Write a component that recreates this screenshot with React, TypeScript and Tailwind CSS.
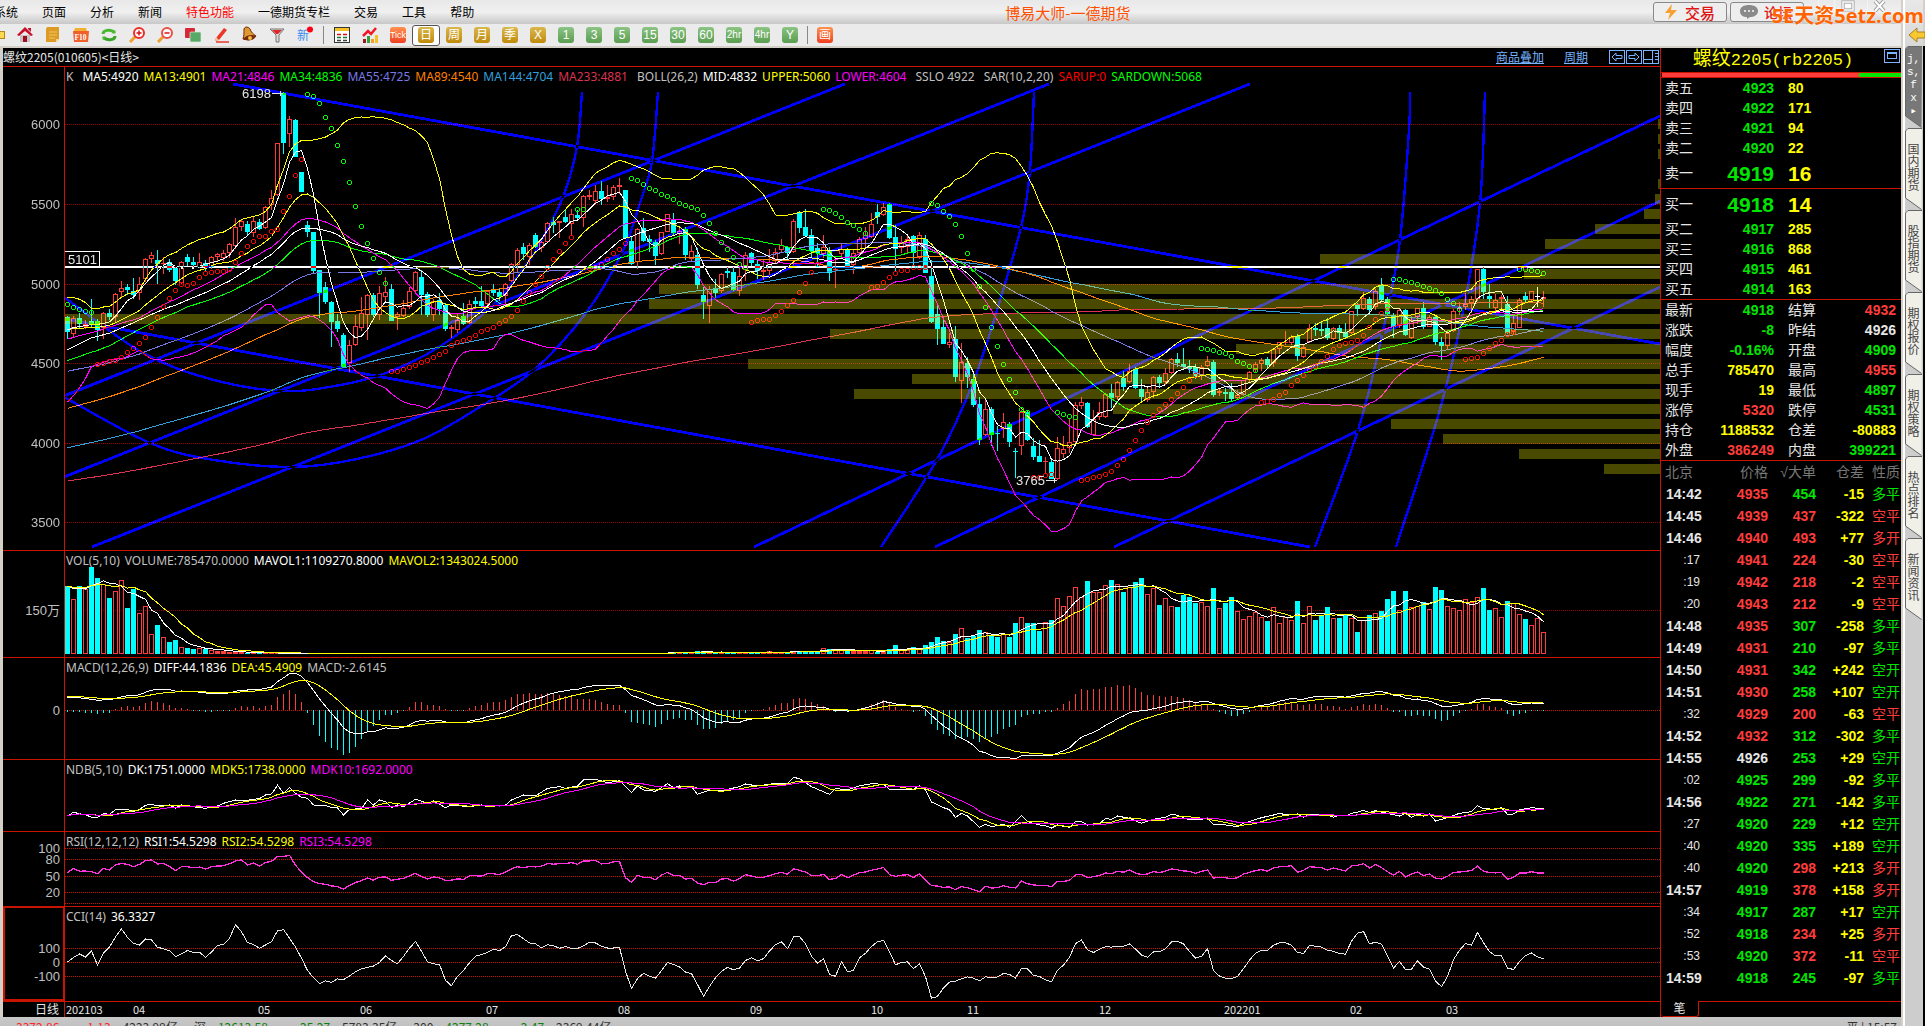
import type { ReactNode } from 'react';

/**
 * Daily bars: direction (u / d / n), high, body top, body bottom, low.
 * Everything in the charts is measured in chart units, three units per pixel.
 */
const BARS = `
d707,710,756,778 u707,714,762,770 d700,713,733,748 u720,732,740,748 d657,724,736,740 d718,722,750,783
u697,700,745,777 d686,699,711,720 u640,643,710,727 u603,625,636,652 d612,620,630,646 d595,633,646,657
u591,612,640,660 u535,538,598,607 u516,526,537,548 d510,540,553,612 u532,550,553,582 d537,546,570,577
d560,563,602,615 u543,547,608,611 d522,531,547,557 d530,546,555,560 u519,547,560,563 d540,550,560,573
u527,532,560,566 u519,523,532,543 u511,520,535,543 u490,493,520,535 u413,442,499,508 u420,424,440,453
d422,432,456,464 u411,424,460,470 d418,426,446,450 u378,382,445,446 u329,355,374,391 u188,190,346,348
d35,40,188,222 u108,118,163,200 d117,121,230,231 d276,277,335,336 d423,435,455,470 d455,457,572,579
d570,571,638,714 d606,622,665,672 d663,667,725,800 d701,724,746,755 d760,766,862,864 u780,794,850,876
u705,739,796,798 u650,700,743,754 u643,646,706,780 d640,645,705,712 u618,640,704,720 u590,637,652,663
d612,628,722,724 u697,703,711,749 u661,683,708,712 u620,634,682,686 u574,577,634,637 d570,592,645,705
d636,643,704,711 u658,662,704,722 d640,661,686,704 d670,675,748,752 u735,742,746,775 u702,721,750,760
d668,707,732,735 u661,673,729,732 d650,663,671,680 d618,664,678,680 u630,634,672,675 d612,629,639,648
d628,637,650,663 u609,613,648,676 u550,553,602,607 u505,509,554,575 d488,502,522,540 u490,496,532,555
d459,465,500,503 u482,487,505,516 u425,430,487,489 d410,427,436,458 u422,424,428,473 d391,411,425,430
u387,403,433,466 d390,405,415,420 u344,349,415,440 u330,346,350,361 u314,334,364,373 d303,334,358,374
u316,352,358,366 u314,322,350,360 u294,316,322,341 d330,331,473,478 d470,484,553,555 u443,448,546,567
d413,444,482,485 d465,478,487,517 d480,486,528,554 u455,457,523,525 u401,403,455,457 d399,420,458,465
u444,452,462,492 d440,447,524,540 u495,514,537,542 d504,526,614,627 d620,645,665,717 u617,628,678,728
d596,625,638,655 u580,583,634,640 d561,573,578,595 d560,577,629,632 u560,589,634,648 u515,525,570,602
d517,519,549,558 d540,552,573,598 u540,570,577,600 u507,546,573,585 u504,517,540,550 u476,495,510,516
d499,501,520,540 u417,424,516,520 d393,395,443,458 d388,441,467,471 d448,465,514,530 d490,505,520,558
u464,500,522,535 d500,512,580,602 u530,566,570,625 u490,507,522,530 d505,510,560,565 u508,520,556,582
u470,476,520,525 u441,466,476,508 u400,433,470,474 d372,395,410,432 u370,380,405,408 d370,372,475,477
d436,472,506,573 u468,487,503,518 u465,478,500,520 d465,468,520,557 u457,464,535,537 d465,477,578,580
d540,588,725,730 d668,703,746,796 d715,742,792,793 u758,785,794,803 d738,777,892,907 u790,847,902,968
d830,850,890,924 d880,897,974,980 d950,972,1079,1095 u954,987,1066,1068 d980,987,1066,1098 d1038,1058,1061,1113
u1000,1027,1047,1074 d1025,1033,1086,1100 d1105,1112,1115,1194 u990,996,1097,1125 d990,995,1080,1082 d1074,1098,1130,1140
d1080,1128,1145,1147 u1130,1143,1146,1178 d1135,1147,1196,1198 u1072,1103,1198,1200 u1069,1107,1122,1135 u1018,1087,1105,1118
u965,975,1085,1088 u951,966,977,988 d965,969,1042,1044 u990,1018,1064,1066 u965,997,1012,1020 u940,943,1012,1014
d911,939,954,984 u903,907,952,960 d873,893,921,933 u852,874,907,910 d862,867,923,928 d898,927,950,963
u925,937,959,965 u888,892,937,955 d885,892,908,925 u865,880,907,915 u834,838,880,882 d820,837,848,860
d804,852,862,866 d840,858,866,880 d852,862,889,898 u855,862,887,899 u828,842,859,862 d840,846,944,950
u923,934,938,948 d925,936,941,962 d910,936,957,964 u930,944,955,960 u899,901,945,947 u872,877,899,905
u846,853,870,875 u835,839,853,873 d830,837,854,866 u805,808,850,860 u786,787,808,822 u753,785,788,795
u765,770,790,795 d762,767,827,842 u795,802,830,833 u732,745,787,790 d730,743,749,768 d725,747,752,767
d715,744,774,780 u740,744,776,780 d735,744,758,784 d728,756,770,775 u693,694,760,762 d669,671,686,708
u635,655,688,690 d650,657,690,696 u627,633,682,689 d594,615,660,665 d652,657,702,706 d698,705,742,775
u688,691,737,744 d686,690,765,767 u708,720,773,776 u683,685,710,732 d665,685,741,746 u705,712,740,740
d705,711,786,795 d770,786,797,840 u750,758,797,808 u688,692,752,756 u665,684,688,704 u640,673,680,690
u648,658,670,700 u566,568,658,662 d562,567,635,658 d612,648,656,684 u641,661,683,695 u645,652,656,690
d648,672,760,763 u707,729,757,764 u655,659,743,745 d636,648,659,669 u632,634,660,662 n620,649,652,681
u633,652,656,680`
  .trim()
  .split(/\s+/)
  .map((s) => {
    const [high, top, bottom, low] = s.slice(1).split(',').map(Number);
    return { dir: s[0], high, top, bottom, low, close: s[0] === 'u' ? top : bottom };
  });

const VOLUME_HEAD = [
  138, 176, 137, 147, 81, 114, 133, 174, 154, 121, 205, 147, 220, 198, 281, 255, 290, 306, 300, 322, 324, 327, 324, 327,
  331, 334, 334, 335, 336, 337,
];
const VOLUME_TAIL = [
  338, 338, 335, 339, 334, 333, 337, 338, 338, 338, 337, 337, 336, 337, 335, 338, 334, 337, 337, 336, 334, 335, 334, 332,
  334, 324, 328, 328, 329, 332, 332, 334, 334, 330, 336, 332, 327, 316, 330, 330, 322, 325, 316, 307, 291, 303, 305, 283,
  265, 293, 288, 270, 277, 285, 292, 282, 291, 249, 232, 250, 249, 273, 245, 240, 175, 199, 169, 142, 172, 123, 155, 157,
  136, 120, 133, 156, 140, 126, 114, 163, 144, 195, 175, 197, 202, 164, 171, 188, 185, 199, 144, 203, 188, 171, 214, 238,
  229, 216, 230, 244, 202, 250, 230, 240, 183, 250, 199, 240, 226, 202, 235, 234, 225, 235, 276, 240, 225, 220, 213, 178,
  153, 210, 153, 202, 198, 186, 208, 141, 150, 198, 203, 210, 178, 185, 172, 144, 210, 203, 232, 183, 190, 223, 237, 256,
  235, 275,
];
const VOLUMES = [
  ...VOLUME_HEAD,
  ...Array<number>(BARS.length - VOLUME_HEAD.length - VOLUME_TAIL.length).fill(339),
  ...VOLUME_TAIL,
];

/** SAR runs: [first bar, colour, values] */
const SAR: [number, string, number[]][] = [
  [0, '#0f0', [673, 682, 686, 693, 697]],
  [5, '#f00', [851, 848, 842, 839, 832, 817, 805, 788, 770, 740, 710, 677, 653, 629, 613, 614, 608, 592, 580, 575, 574, 573, 567, 545, 520, 499, 484, 469, 469, 452, 446, 394, 349, 286, 238]],
  [40, '#0f0', [41, 49, 70, 110, 145, 196, 244, 307, 377, 437, 488, 535, 575, 610]],
  [54, '#f00', [874, 872, 867, 860, 854, 847, 840, 832, 822, 812, 794, 785, 779, 773, 764, 754, 748, 740, 730, 721, 709, 691, 664, 637, 613, 587, 562, 536, 512, 490, 472]],
  [85, '#0f0', [388, 386]],
  [87, '#f00', [563, 560, 553, 537, 520, 508, 490]],
  [94, '#0f0', [295, 301, 313, 323, 331, 341, 349, 358, 368, 376, 382, 388, 404, 430, 458, 485, 508, 532, 551, 562]],
  [114, '#f00', [727, 721, 718, 716, 706, 694, 676, 661, 637, 608, 577, 551]],
  [126, '#0f0', [388, 391, 400, 412, 425, 436, 448, 458]],
  [134, '#f00', [622, 617, 607, 592, 580, 571, 571, 560, 560, 560]],
  [144, '#0f0', [370, 376, 394, 409, 433, 469, 520, 567, 617, 682, 740, 797, 853, 898, 937, 988, 997]],
  [161, '#f00', [1192, 1190, 1184, 1182]],
  [165, '#0f0', [997, 1003, 1007, 1010]],
  [169, '#f00', [1201, 1198, 1192, 1187, 1183, 1173, 1156, 1138, 1111, 1081, 1051, 1027, 1006, 988, 973, 958, 940, 922, 901, 884]],
  [189, '#0f0', [804, 808, 811, 817, 820, 829, 842, 850, 859, 869]],
  [199, '#f00', [965, 962, 956, 946, 935, 916, 901, 886, 871, 857, 842, 827, 808, 794, 788, 787, 779, 764, 740, 718, 700, 688]],
  [221, '#0f0', [596, 598, 603, 607, 613, 619, 625, 631, 640, 658, 670, 687]],
  [233, '#f00', [838, 835, 832, 820, 805, 790, 779, 763, 757]],
  [242, '#0f0', [566, 568, 571, 574, 580]],
];

/** NDB line, key points: bar, value */
const DK_POINTS: [number, number][] = [
  [0, 828], [1, 817], [2, 821], [3, 824], [4, 832], [5, 832], [6, 821], [7, 823], [8, 809], [10, 808], [11, 815], [12, 808],
  [13, 796], [14, 793], [15, 798], [17, 795], [18, 804], [19, 795], [20, 798], [23, 805], [25, 798], [26, 790], [28, 780],
  [29, 783], [31, 778], [32, 776], [33, 765], [34, 762], [35, 736], [36, 760], [37, 742], [38, 760], [39, 772], [40, 775],
  [41, 795], [43, 797], [44, 802], [45, 804], [46, 825], [47, 808], [49, 806], [50, 780], [51, 795], [52, 780], [53, 785],
  [54, 803], [55, 795], [56, 800], [58, 778], [60, 790], [61, 783], [63, 803], [64, 795], [67, 800], [69, 795], [70, 800],
  [73, 795], [74, 780], [76, 765], [78, 768], [80, 745], [82, 740], [83, 745], [85, 738], [86, 720], [88, 718], [90, 728],
  [92, 722], [94, 757], [95, 738], [96, 750], [98, 754], [100, 731], [101, 743], [102, 738], [104, 740], [105, 763],
  [107, 750], [109, 752], [110, 748], [112, 740], [113, 732], [115, 738], [118, 730], [120, 730], [121, 712], [122, 716],
  [124, 740], [127, 763], [128, 745], [130, 750], [132, 737], [134, 731], [136, 733], [137, 748], [141, 748], [142, 737],
  [143, 750], [144, 786], [146, 803], [147, 809], [148, 832], [149, 820], [150, 828], [152, 862], [153, 853], [154, 860],
  [156, 853], [157, 862], [159, 826], [160, 845], [162, 855], [163, 857], [164, 864], [165, 855], [167, 862], [168, 845],
  [169, 845], [170, 855], [172, 850], [173, 836], [174, 838], [175, 828], [177, 835], [179, 850], [181, 838], [183, 832],
  [184, 823], [185, 826], [187, 840], [190, 836], [191, 853], [193, 855], [195, 860], [196, 850], [199, 833], [201, 825],
  [202, 820], [203, 824], [205, 822], [206, 832], [207, 824], [210, 824], [211, 832], [212, 826], [213, 828], [214, 820],
  [215, 817], [216, 811], [217, 818], [218, 812], [220, 820], [222, 828], [223, 820], [224, 832], [225, 822], [226, 828],
  [227, 822], [228, 843], [230, 833], [232, 820], [234, 815], [235, 797], [236, 806], [238, 808], [239, 803], [240, 823],
  [241, 822], [242, 810], [244, 803], [246, 806],
];

/** Closes from before the visible range, as [count, level], newest first */
const HISTORY = ([[13, 748], [8, 837], [5, 969], [8, 945], [21, 924], [34, 1173], [55, 1296], [100, 1366]] as const)
  .flatMap(([n, v]) => Array<number>(n).fill(v))
  .reverse();

const CLOSES = BARS.map((b) => b.close);

const movingAverage = (values: number[], n: number, history: number[] = []) => {
  const all = [...history, ...values];
  return values.map((_, i) => {
    const end = i + history.length + 1;
    const part = all.slice(Math.max(0, end - n), end);
    return part.reduce((a, b) => a + b, 0) / part.length;
  });
};

const deviation = (values: number[], n: number, history: number[]) => {
  const all = [...history, ...values];
  return values.map((_, i) => {
    const end = i + history.length + 1;
    const part = all.slice(end - n, end);
    const mean = part.reduce((a, b) => a + b, 0) / n;
    return Math.sqrt(part.reduce((a, b) => a + (b - mean) ** 2, 0) / n);
  });
};

const interpolate = (points: [number, number][]) => {
  const out: number[] = [];
  points.slice(1).forEach(([x1, y1], k) => {
    const [x0, y0] = points[k];
    for (let x = x0; x < x1; x++) out.push(y0 + ((y1 - y0) * (x - x0)) / (x1 - x0));
  });
  out.push(points[points.length - 1][1]);
  return out;
};

const macd = () => {
  let fast = 748;
  let slow = 790;
  let dea = -42;
  return CLOSES.map((c) => {
    fast += ((c - fast) * 2) / 13;
    slow += ((c - slow) * 2) / 27;
    const diff = fast - slow;
    dea += (diff - dea) * 0.2;
    return { diff, dea, bar: (diff - dea) * 2 };
  });
};

const rsi = () => {
  let gain = 11;
  let total = 19;
  let prev = 745;
  return CLOSES.map((c) => {
    const change = prev - c;
    gain += (Math.max(change, 0) - gain) / 12;
    total += (Math.abs(change) - total) / 12;
    prev = c;
    return (gain / total) * 100;
  });
};

/** CCI of the first 14 bars, whose window starts before the visible range */
const CCI_HEAD = [0, 33, 57, 36, 79, -21, 64, 107, 179, 236, 176, 133, 121, 164];

const cci = () => {
  const typical = BARS.map((b) => (b.high + b.low + b.close) / 3);
  return typical.map((tp, i) => {
    if (i < CCI_HEAD.length) return CCI_HEAD[i];
    const part = typical.slice(i - 13, i + 1);
    const mean = part.reduce((a, b) => a + b, 0) / 14;
    const md = part.reduce((a, b) => a + Math.abs(b - mean), 0) / 14;
    return (mean - tp) / (0.015 * md);
  });
};

const MID = movingAverage(CLOSES, 26, HISTORY);
const SIGMA = deviation(CLOSES, 26, HISTORY);
const MACD = macd();
const RSI = rsi();
const CCI = cci();
const DK = interpolate(DK_POINTS);

const barX = (i: number) => 64 + i * 6;

const PRICE_LINES: [string, number[]][] = [
  ['#dc3250', movingAverage(CLOSES, 233, HISTORY)],
  ['#32a0dc', movingAverage(CLOSES, 144, HISTORY)],
  ['#ff8000', movingAverage(CLOSES, 89, HISTORY)],
  ['#7878e6', movingAverage(CLOSES, 55, HISTORY)],
  ['#00ff00', movingAverage(CLOSES, 34, HISTORY)],
  ['#ff00ff', movingAverage(CLOSES, 21, HISTORY)],
  ['#ffff00', movingAverage(CLOSES, 13, HISTORY)],
  ['#ffffff', MID],
  ['#ffff00', MID.map((m, i) => m - 2 * SIGMA[i])],
  ['#ff00ff', MID.map((m, i) => m + 2 * SIGMA[i])],
  ['#ffffff', movingAverage(CLOSES, 5, HISTORY)],
];

/** Trend channel: straight lines, in window coordinates */
const CHANNELS = [
  [233, 84, 1660, 344], [65, 319, 1310, 547], [64, 396, 845, 84], [64, 477, 1049, 84], [92, 547, 1250, 84],
  [754, 547, 1660, 116], [935, 547, 1660, 201], [1114, 547, 1660, 287],
];

const ARCS = [
  [[64, 297], [143, 353], [214, 380], [282, 391], [335, 386], [386, 373], [439, 347], [493, 305], [528, 262], [540, 243], [563, 197], [577, 147], [582, 92]],
  [[64, 397], [150, 443], [214, 460], [293, 467], [357, 459], [421, 440], [475, 410], [534, 370], [586, 313], [622, 253], [640, 203], [652, 161], [658, 92]],
  [[881, 547], [938, 458], [974, 380], [1001, 297], [1022, 223], [1030, 170], [1034, 92]],
  [[1315, 547], [1359, 427], [1386, 317], [1400, 240], [1409, 130], [1410, 92]],
  [[1396, 547], [1439, 413], [1464, 307], [1480, 203], [1485, 92]],
];

/** Volume profile, top to bottom: width of each bar */
const PROFILE = [2, 2, 2, 0, 2, 5, 16, 65, 115, 340, 136, 1001, 1011, 1595, 830, 424, 912, 748, 806, 547, 269, 217, 141, 56];

const polyline = (values: number[], y: (v: number) => number) =>
  values.map((v, i) => `${barX(i) + 0.5},${y(v).toFixed(1)}`).join(' ');

const smoothPath = (pts: number[][]) =>
  pts
    .map(([x, y], i) => {
      if (i === 0) return `M${x} ${y}`;
      const p0 = pts[Math.max(0, i - 2)];
      const p1 = pts[i - 1];
      const p3 = pts[Math.min(pts.length - 1, i + 1)];
      return `C${p1[0] + (x - p0[0]) / 6} ${p1[1] + (y - p0[1]) / 6} ${x - (p3[0] - p1[0]) / 6} ${y - (p3[1] - p1[1]) / 6} ${x} ${y}`;
    })
    .join('');

type Legend = [string, string][];

const G = 'text-[#c0c0c0]';
const W = 'text-white';
const Y = 'text-[#ffff00]';
const M = 'text-[#ff00ff]';

const GridLine = ({ y, label, bright }: { y: number; label?: string; bright?: boolean }) => (
  <>
    <line x1="62" x2="100%" y1={y + 0.5} y2={y + 0.5} stroke={bright ? '#c81400' : '#960000'} strokeDasharray="1 1" />
    {label && (
      <text x="57" y={y + 5} textAnchor="end" fill="#c0c0c0" fontSize="13" fontFamily="'Liberation Sans','Noto Sans CJK SC',sans-serif">
        {label}
      </text>
    )}
  </>
);

function Pane({ height, legend, children, active }: { height: string; legend: Legend; children: ReactNode; active?: boolean }) {
  return (
    <section className={`relative shrink-0 overflow-hidden border-b border-[#c81400] ${height}`}>
      <svg className="isolate block h-full w-full bg-black" shapeRendering="crispEdges">
        {children}
        <line x1="61.5" x2="61.5" y1="0" y2="100%" stroke="#c81400" />
        {active && <rect x="1" y="0" width="60" height="93" fill="none" stroke="#c81400" strokeWidth="2" />}
      </svg>
      <p className="absolute top-[2px] left-[63px] flex gap-[5px] font-['Noto_Sans','Liberation_Sans',sans-serif] text-[12px] leading-4 whitespace-nowrap">
        {legend.map(([text, color]) => (
          <span key={text} className={color}>
            {text}
          </span>
        ))}
      </p>
    </section>
  );
}

function PricePane() {
  const y = (v: number) => v / 3 + 13;
  return (
    <Pane
      height="h-[484px]"
      legend={[
        ['K', `${G} mr-1`], ['MA5:4920', W], ['MA13:4901', Y], ['MA21:4846', M], ['MA34:4836', 'text-[#00ff00]'],
        ['MA55:4725', 'text-[#7878e6]'], ['MA89:4540', 'text-[#ff8000]'], ['MA144:4704', 'text-[#32a0dc]'],
        ['MA233:4881', 'text-[#dc3250] mr-1'], ['BOLL(26,2)', G], ['MID:4832', W], ['UPPER:5060', Y],
        ['LOWER:4604', `${M} mr-1`], ['SSLO 4922', `${G} mr-1`], ['SAR(10,2,20)', G], ['SARUP:0', 'text-[#ff0000]'],
        ['SARDOWN:5068', 'text-[#00ff00]'],
      ]}
    >
      {[6000, 5500, 5000, 4500, 4000, 3500].map((p, i) => (
        <GridLine key={p} y={[57, 137, 217, 296, 376, 455][i]} label={String(p)} />
      ))}
      {BARS.map((b, i) => {
        const x = barX(i);
        const color = b.dir === 'u' ? '#ff3c3c' : b.dir === 'n' ? '#ffffff' : '#00ffff';
        const top = Math.round(y(b.top));
        const h = Math.max(1, Math.round(y(b.bottom)) - top);
        const hollow = b.dir === 'u' && h > 2;
        return (
          <g key={i}>
            <rect x={x} width="1" y={Math.round(y(b.high))} height={Math.max(0, top - Math.round(y(b.high)))} fill={color} />
            <rect x={x} width="1" y={top + h} height={Math.max(0, Math.round(y(b.low)) - top - h)} fill={color} />
            {hollow ? (
              <rect x={x - 1.5} y={top + 0.5} width="4" height={h - 1} fill="none" stroke={color} />
            ) : (
              <rect x={x - 2} y={top} width="5" height={h} fill={color} />
            )}
          </g>
        );
      })}
      {PRICE_LINES.map(([color, values], i) => (
        <polyline key={i} points={polyline(values, y)} fill="none" stroke={color} />
      ))}
      {SAR.map(([start, color, values]) =>
        values.map((v, k) => (
          <circle key={`${start}-${k}`} cx={barX(start + k) + 0.5} cy={Math.round(y(v)) + 0.5} r="2" fill="none" stroke={color} />
        )),
      )}
      {/* drawing tools invert what lies under them */}
      <line x1="62" x2="100%" y1="200" y2="200" stroke="#fff" strokeWidth="2" className="mix-blend-difference" />
      {CHANNELS.map(([x1, y1, x2, y2]) => (
        <line
          key={`${x1}-${y1}`}
          x1={x1 - 3}
          y1={y1 - 67}
          x2={x2 - 3}
          y2={y2 - 67}
          stroke="#0000ff"
          strokeWidth="2.8"
          className="mix-blend-difference"
        />
      ))}
      {ARCS.map((pts, i) => (
        <path
          key={i}
          d={smoothPath(pts.map(([px, py]) => [px - 3, py - 67]))}
          fill="none"
          stroke="#0000ff"
          strokeWidth="2.4"
          className="mix-blend-difference"
        />
      ))}
      <svg x="100%" overflow="visible">
        {PROFILE.map((w, i) => (
          <rect key={i} x={-w} y={52 + i * 15} width={w} height="10" fill="#ffff00" fillOpacity="0.286" />
        ))}
      </svg>
      <rect x="61.5" y="184.5" width="35" height="15" fill="#000" stroke="#fff" />
      <g fill="#e6e6e6" fontSize="13" fontFamily="'Liberation Sans',sans-serif">
        <text x="65" y="197">5101</text>
        <text x="239" y="31">6198</text>
        <text x="1013" y="418">3765</text>
      </g>
      <path d="M269 26.5h11M277 24v5M1043 413.5h11M1051 411v5" stroke="#e6e6e6" fill="none" />
    </Pane>
  );
}

function VolumePane() {
  const y = (v: number) => v / 3 - 11;
  return (
    <Pane height="h-[107px]" legend={[['VOL(5,10)', G], ['VOLUME:785470.0000', G], ['MAVOL1:1109270.8000', W], ['MAVOL2:1343024.5000', Y]]}>
      <GridLine y={59} label="150万" />
      {VOLUMES.map((v, i) => {
        const top = Math.round(y(v));
        const up = BARS[i].dir !== 'd';
        return up && 102 - top > 2 ? (
          <rect key={i} x={barX(i) - 1.5} y={top + 0.5} width="4" height={102 - top} fill="none" stroke="#ff3c3c" />
        ) : (
          <rect key={i} x={barX(i) - 2} y={top} width="5" height={103 - top} fill={up ? '#ff3c3c' : '#00ffff'} />
        );
      })}
      <polyline points={polyline(movingAverage(VOLUMES, 5, [138, 138, 138, 138]), y)} fill="none" stroke="#fff" />
      <polyline points={polyline(movingAverage(VOLUMES, 10, Array<number>(9).fill(138)), y)} fill="none" stroke="#ff0" />
    </Pane>
  );
}

function MacdPane() {
  const y = (v: number) => 52 + v / 3;
  return (
    <Pane height="h-[102px]" legend={[['MACD(12,26,9)', G], ['DIFF:44.1836', W], ['DEA:45.4909', Y], ['MACD:-2.6145', G]]}>
      <GridLine y={52} label="0" bright />
      {MACD.map(({ bar }, i) => (
        <rect
          key={i}
          x={barX(i)}
          y={Math.min(52, y(bar))}
          width="1"
          height={Math.max(1, Math.abs(bar) / 3)}
          fill={bar < 0 ? '#ff3c3c' : '#00ffff'}
        />
      ))}
      <polyline points={polyline(MACD.map((m) => m.diff), y)} fill="none" stroke="#fff" />
      <polyline points={polyline(MACD.map((m) => m.dea), y)} fill="none" stroke="#ff0" />
    </Pane>
  );
}

function NdbPane() {
  const y = (v: number) => v / 3 - 220;
  return (
    <Pane height="h-[72px]" legend={[['NDB(5,10)', G], ['DK:1751.0000', W], ['MDK5:1738.0000', Y], ['MDK10:1692.0000', M]]}>
      <polyline points={polyline(DK, y)} fill="none" stroke="#fff" />
      <polyline points={polyline(movingAverage(DK, 5), y)} fill="none" stroke="#ff0" />
      <polyline points={polyline(movingAverage(DK, 10), y)} fill="none" stroke="#f0f" />
    </Pane>
  );
}

function RsiPane() {
  return (
    <Pane height="h-[75px]" legend={[['RSI(12,12,12)', G], ['RSI1:54.5298', W], ['RSI2:54.5298', Y], ['RSI3:54.5298', M]]}>
      <GridLine y={16} label="100" bright />
      <GridLine y={27} label="80" bright />
      <GridLine y={44} label="50" bright />
      <GridLine y={60} label="20" bright />
      <GridLine y={71} bright />
      <polyline points={polyline(RSI, (v) => 71 - v * 0.55)} fill="none" stroke="#ff32dc" strokeWidth="1.3" />
    </Pane>
  );
}

function CciPane() {
  return (
    <Pane height="h-[95px]" legend={[['CCI(14)', G], ['36.3327', W]]} active>
      <GridLine y={41} label="100" bright />
      <GridLine y={55} label="0" bright />
      <GridLine y={69} label="-100" bright />
      <polyline points={polyline(CCI, (v) => 55 - v * 0.14)} fill="none" stroke="#e6e6e6" />
    </Pane>
  );
}

const MONTHS: [string, number][] = [
  ['202103', 63], ['04', 130], ['05', 255], ['06', 357], ['07', 483], ['08', 615], ['09', 747], ['10', 868], ['11', 964],
  ['12', 1096], ['202201', 1221], ['02', 1347], ['03', 1443],
];

function DateAxis() {
  return (
    <svg className="block h-[15px] w-full shrink-0" fontFamily="'Noto Sans CJK SC',sans-serif" fontSize="11" fill="#e6e6e6">
      <text x="56" y="12" textAnchor="end" fontSize="12">日线</text>
      <line x1="61.5" x2="61.5" y1="0" y2="15" stroke="#c81400" />
      {MONTHS.map(([m, x]) => (
        <text key={m} x={x} y="12">
          {m}
        </text>
      ))}
    </svg>
  );
}

/* ---------- quote panel ---------- */

const COLORS: Record<string, string> = {
  g: 'text-[#00e600]',
  r: 'text-[#ff3c3c]',
  y: 'text-[#ffff00]',
  w: 'text-[#e6e6e6]',
};

const ASKS = [['卖五', '4923', '80'], ['卖四', '4922', '171'], ['卖三', '4921', '94'], ['卖二', '4920', '22'], ['卖一', '4919', '16']];
const BIDS = [['买一', '4918', '14'], ['买二', '4917', '285'], ['买三', '4916', '868'], ['买四', '4915', '461'], ['买五', '4914', '163']];

const STATS = [
  ['最新', '4918', 'g', '结算', '4932', 'r'],
  ['涨跌', '-8', 'g', '昨结', '4926', 'w'],
  ['幅度', '-0.16%', 'g', '开盘', '4909', 'g'],
  ['总手', '785470', 'y', '最高', '4955', 'r'],
  ['现手', '19', 'y', '最低', '4897', 'g'],
  ['涨停', '5320', 'r', '跌停', '4531', 'g'],
  ['持仓', '1188532', 'y', '仓差', '-80883', 'y'],
  ['外盘', '386249', 'r', '内盘', '399221', 'g'],
];

const TICKS = `
14:42 4935 r 454 g -15 多平|14:45 4939 r 437 r -322 空平|14:46 4940 r 493 r +77 多开|:17 4941 r 224 r -30 空平
:19 4942 r 218 r -2 空平|:20 4943 r 212 r -9 空平|14:48 4935 r 307 g -258 多平|14:49 4931 r 210 g -97 多平
14:50 4931 r 342 g +242 空开|14:51 4930 r 258 g +107 空开|:32 4929 r 200 r -63 空平|14:52 4932 r 312 g -302 多平
14:55 4926 w 253 g +29 空开|:02 4925 g 299 g -92 多平|14:56 4922 g 271 g -142 多平|:27 4920 g 229 g +12 空开
:40 4920 g 335 g +189 空开|:40 4920 g 298 r +213 多开|14:57 4919 g 378 r +158 多开|:34 4917 g 287 g +17 空开
:52 4918 g 234 r +25 多开|:53 4920 g 372 r -11 空平|14:59 4918 g 245 g -97 多平`
  .trim()
  .split(/[|\n]/)
  .map((row) => row.split(' '));

function DepthTable({ rows }: { rows: string[][] }) {
  return (
    <table className="w-full table-fixed border-separate border-spacing-0 border-b border-[#c81400]">
      <colgroup>
        <col className="w-[52px]" />
        <col className="w-[61px]" />
        <col />
      </colgroup>
      <tbody>
        {rows.map(([label, price, amount]) => {
          const best = label.endsWith('一');
          return (
            <tr key={label} className={best ? 'h-[30px] text-[21px]' : 'h-5 text-[14px]'}>
              <th scope="row" className="pl-1 text-left text-[14px] font-normal text-[#e6e6e6]">{label}</th>
              <td className="text-right text-[#00e600]">{price}</td>
              <td className="pl-[14px] text-[#ffff00]">{amount}</td>
            </tr>
          );
        })}
      </tbody>
    </table>
  );
}

function QuotePanel() {
  return (
    <aside className="flex w-[241px] shrink-0 flex-col border-l border-[#c81400] bg-black font-['Liberation_Sans','Noto_Sans_CJK_SC',sans-serif] text-[14px] leading-none font-bold">
      <div className="relative flex h-6 items-center justify-center pr-4">
        <h2 className="flex items-center font-['Liberation_Mono','Noto_Sans_CJK_SC',monospace] text-[17px] leading-none font-normal text-[#ffff00]">
          <span className="text-[19px]">螺纹</span>
          <span>2205(rb2205)</span>
        </h2>
        <button aria-label="窗口" className="absolute top-[1px] right-[1px]">
          <svg width="16" height="14" fill="none" stroke="#78b4ff">
            <rect x=".5" y=".5" width="15" height="13" />
            <rect x="3.5" y="3.5" width="9" height="6" />
            <path d="M3 4.5h10" />
          </svg>
        </button>
      </div>
      <div className="flex h-[6px] shrink-0 border-y border-[#c81400] pl-px">
        <div className="grow bg-[#ff3c3c]" />
        <div className="w-[42px] bg-[#00e600]" />
      </div>
      <DepthTable rows={ASKS} />
      <DepthTable rows={BIDS} />
      <table className="w-full table-fixed border-separate border-spacing-0 border-b border-[#c81400]">
        <colgroup>
          <col className="w-[40px]" />
          <col className="w-[73px]" />
          <col className="w-[50px]" />
          <col />
        </colgroup>
        <tbody>
          {STATS.map(([l1, v1, c1, l2, v2, c2]) => (
            <tr key={l1} className="h-5">
              <th scope="row" className="pl-1 text-left font-normal text-[#e6e6e6]">{l1}</th>
              <td className={`text-right ${COLORS[c1]}`}>{v1}</td>
              <th scope="row" className="pl-[14px] text-left font-normal text-[#e6e6e6]">{l2}</th>
              <td className={`pr-[5px] text-right ${COLORS[c2]}`}>{v2}</td>
            </tr>
          ))}
        </tbody>
      </table>
      <table className="w-full table-fixed">
        <thead className="font-normal text-[#787878]">
          <tr className="h-[22px]">
            <th className="w-[53px] pl-1 text-left font-normal">北京</th>
            <th className="w-[54px] text-right font-normal">价格</th>
            <th className="w-[48px] text-right font-normal whitespace-nowrap">√大单</th>
            <th className="w-[48px] text-right font-normal">仓差</th>
            <th className="pr-px text-right font-normal">性质</th>
          </tr>
        </thead>
        <tbody>
          {TICKS.map(([time, price, pc, lot, lc, diff, kind], i) => (
            <tr key={i} className="h-[22px] whitespace-nowrap">
              {time.length > 3 ? (
                <td className="pl-[5px] text-[#e6e6e6]">{time}</td>
              ) : (
                <td className="pr-[14px] text-right text-[12px] font-normal text-[#e6e6e6]">{time}</td>
              )}
              <td className={`text-right ${COLORS[pc]}`}>{price}</td>
              <td className={`text-right ${COLORS[lc]}`}>{lot}</td>
              <td className="text-right text-[#ffff00]">{diff}</td>
              <td className={`pr-px text-right font-normal ${COLORS[lc]}`}>{kind}</td>
            </tr>
          ))}
        </tbody>
      </table>
      <div className="mt-auto flex h-4">
        <button className="w-[38px] rounded-b-[3px] border-r border-b border-[#c81400] text-[12px] leading-none font-normal text-[#e6e6e6]">
          笔
        </button>
        <div className="grow border-t border-[#c81400]" />
      </div>
    </aside>
  );
}

/* ---------- window chrome ---------- */

const MENU = ['系统', '页面', '分析', '新闻', '特色功能', '一德期货专栏', '交易', '工具', '帮助'];

const PERIODS = [
  ['日', 'gold'], ['周', 'gold'], ['月', 'gold'], ['季', 'gold'], ['X', 'gold'], ['1', 'green'], ['3', 'green'], ['5', 'green'],
  ['15', 'green'], ['30', 'green'], ['60', 'green'], ['2hr', 'green'], ['4hr', 'green'], ['Y', 'green'],
];

const TILE: Record<string, string> = {
  gold: 'bg-linear-to-b from-[#d9b84a] to-[#c08a00]',
  green: 'bg-linear-to-b from-[#8cc484] to-[#5a9c50]',
  red: 'bg-linear-to-b from-[#ff9050] to-[#ee3c1e]',
};

function Tile({ label, tone, selected }: { label: string; tone: string; selected?: boolean }) {
  return (
    <button
      className={`flex h-[21px] w-7 shrink-0 items-center justify-center rounded-[3px] ${selected ? 'border border-[#555] bg-white' : ''}`}
    >
      <span
        className={`flex h-4 w-4 items-center justify-center rounded-[3px] font-['Liberation_Sans_Narrow','Liberation_Sans','Noto_Sans_CJK_SC',sans-serif] leading-none text-white ${TILE[tone]} ${label.length > 3 ? 'text-[9px]' : label.length > 2 ? 'text-[10px]' : 'text-[12px]'}`}
      >
        {label}
      </span>
    </button>
  );
}

const TOOLS: [string, ReactNode][] = [
  ['主页', <><path d="M3 8h10v7H3z" fill="#c9c4c4" /><path d="M0 8l8-8 8 8-2 1-6-5-6 5z" fill="#c8102a" /><path d="M11 1h3v4l-3-3z" fill="#c8102a" /><path d="M6 9h4v6H6z" fill="#a00c20" /></>],
  ['公告', <><path d="M2 0h12v12l-3 3H1V2z" fill="#dc9c24" /><path d="M11 15v-3h3z" fill="#f8dc90" /><path d="M4 5h8M4 8h8M4 11h6" stroke="#f0c468" /></>],
  ['F10', <><path d="M2 1h11l1 3H1z" fill="#f0b030" /><path d="M0 4h16l-1 11H1z" fill="#f0602c" /><text x="1.5" y="12.5" fill="#fff" fontSize="7.5" fontWeight="700" fontFamily="Liberation Serif,serif">F10</text></>],
  ['刷新', <g fill="none" strokeWidth="3"><path d="M2 7C2 3 9 2 13 5" stroke="#48b830" /><path d="M14 9c0 4-7 5-11 2" stroke="#3aa428" /><path d="M11.500 5.500h2v-2M4.500 10.500h-2v2" stroke="#48b830" strokeWidth="2" /></g>],
  ['放大', <><path d="M1 15l6-6" stroke="#f0a030" strokeWidth="3" /><circle cx="10" cy="6" r="5" fill="#fff" stroke="#e83028" strokeWidth="2" /><path d="M7.500 6h5M10 3.500v5" stroke="#e01010" strokeWidth="1.500" /></>],
  ['缩小', <><path d="M1 15l6-6" stroke="#f0a030" strokeWidth="3" /><circle cx="10" cy="6" r="5" fill="#fff" stroke="#e85048" strokeWidth="2" /><path d="M7.500 6h5" stroke="#e01010" strokeWidth="1.500" /></>],
  ['叠加', <><rect x="0" y="1" width="10" height="10" rx="1" fill="#d82838" /><rect x="5" y="5" width="11" height="10" rx="1" fill="#58a868" stroke="#d8ecd8" strokeWidth=".7" /></>],
  ['画线', <><path d="M3 11L11 1l3 2-8 10-4 1z" fill="#e83828" /><path d="M2 14l1-4 3 3z" fill="#f4c890" /><path d="M3 15h13" stroke="#e83828" strokeWidth="1.500" /></>],
  ['预警', <><path d="M3 2c1-3 5-2 6 0 1 3 3 5 6 7-2 3-6 5-13 3 1-3 1-6 1-10z" fill="#e09830" stroke="#6a2c08" /><path d="M2 12c3-4 9-5 13-3-2 4-7 6-13 3z" fill="#7a2c10" /><circle cx="9" cy="11" r="2" fill="#f0c040" /></>],
  ['筛选', <><path d="M1 2h14l-5 6v7H7V8z" fill="#d8d8d8" stroke="#777" /><path d="M3 3h10L9 7H7z" fill="#e02828" /></>],
  ['新', <><text x="0" y="13" fontSize="12" fill="#3c8cf0" fontFamily="Noto Sans CJK SC,sans-serif">新</text><circle cx="13" cy="2.500" r="3" fill="#ff0014" /></>],
];

const TOOLS_RIGHT: [string, ReactNode][] = [
  ['报价', <><rect x=".5" y=".5" width="15" height="15" fill="#fff" stroke="#303838" /><path d="M1 2.500h14" stroke="#f8c020" strokeWidth="3" /><path d="M3 7.500h4M9 7.500h4" stroke="#e01010" strokeWidth="1.500" /><path d="M3 10.500h4M9 10.500h4" stroke="#108030" strokeWidth="1.500" /><path d="M3 13.500h4M9 13.500h4" stroke="#404040" strokeWidth="1.500" /></>],
  ['走势', <><path d="M1 16v-4h3v4z" fill="#a01818" /><path d="M5 16v-7h3v7z" fill="#30a040" /><path d="M9 16v-4h3v4z" fill="#f0a020" /><path d="M13 16V8h3v8z" fill="#f8c020" /><path d="M1 9l5-5 3 3 5-6" fill="none" stroke="#f01828" strokeWidth="2.500" /></>],
];

function IconButton({ label, children }: { label: string; children: ReactNode }) {
  return (
    <button aria-label={label} className="flex h-5 w-7 shrink-0 items-center justify-center">
      <svg width="16" height="16" viewBox="0 0 16 16" overflow="visible">{children}</svg>
    </button>
  );
}

function Header() {
  return (
    <header className="shrink-0">
      <div className="flex h-6 items-center justify-between bg-linear-to-b from-[#e8e8e8] via-[#f0f0f0] to-[#c8c8c8]">
        <nav className="-ml-[6px] flex flex-[4] gap-6 text-[12px] leading-none">
          {MENU.map((m) => (
            <button key={m} className={m === '特色功能' ? 'text-[#ff0000]' : 'text-black'}>
              {m}
            </button>
          ))}
        </nav>
        <h1 className="text-[15px] leading-none text-[#ff5000]">博易大师-一德期货</h1>
        <div className="flex flex-[3] items-center justify-end gap-[3px] pr-3">
          <button className="flex h-5 w-[74px] items-center justify-center gap-2 rounded-[3px] border border-[#888] bg-[#eee] text-[15px] leading-none font-medium text-[#e01414]">
            <svg width="12" height="16" viewBox="0 0 12 16"><path d="M7 0L0 9h5l-2 7 9-10H6z" fill="#f8a030" /></svg>
            交易
          </button>
          <button className="flex h-5 w-[74px] items-center gap-[6px] rounded-[3px] border border-[#888] bg-[#eee] pl-[9px] text-[14px] leading-none font-medium whitespace-nowrap text-[#e01414]">
            <svg width="18" height="14" viewBox="0 0 18 14">
              <path d="M9 0c5 0 9 2 9 6s-4 6-8 6l-3 2v-2C3 12 0 10 0 6s4-6 9-6z" fill="#8a8a8a" />
              <path d="M4 6h2M8 6h2M12 6h2" stroke="#ddd" strokeWidth="2" />
            </svg>
            论坛
          </button>
          <svg width="82" height="24" viewBox="0 0 82 24" fill="none">
            <path d="M11.500 0v10M27.500 0v10M60.500 0v10" stroke="#f4f4f4" />
            <path d="M36 2h10v8H36z" stroke="#999" strokeWidth="3" />
            <path d="M36 2h10v8H36zM39 5h4v2h-4z" stroke="#fff" strokeWidth="1.500" />
            <path d="M68 1l9 10M77 1l-9 10" stroke="#999" strokeWidth="4" />
            <path d="M68 1l9 10M77 1l-9 10" stroke="#fff" strokeWidth="2" />
          </svg>
        </div>
      </div>
      <div className="flex h-[22px] items-center bg-[#ebebeb]">
        <div className="mr-[6px] h-2 w-[5px] border border-l-0 border-[#b08820] bg-[#ffd850]" />
        {TOOLS.map(([label, icon]) => (
          <IconButton key={label} label={label}>{icon}</IconButton>
        ))}
        <div className="mx-1 h-[18px] w-px bg-[#888]" />
        {TOOLS_RIGHT.map(([label, icon]) => (
          <IconButton key={label} label={label}>{icon}</IconButton>
        ))}
        <Tile label="Tick" tone="red" />
        {PERIODS.map(([label, tone]) => (
          <Tile key={label} label={label} tone={tone} selected={label === '日'} />
        ))}
        <div className="mx-[3px] h-[18px] w-px bg-[#888]" />
        <Tile label="画" tone="red" />
      </div>
      <div className="h-[2px] bg-[#d4d0c8]" />
    </header>
  );
}

function ChartPanel() {
  return (
    <main className="flex min-w-0 flex-1 flex-col bg-black">
      <div className="flex h-[19px] shrink-0 items-center border-b border-[#c81400] text-[12px] leading-none">
        <span className="grow text-[#e6e6e6]">螺纹2205(010605)&lt;日线&gt;</span>
        <a href="#overlay" className="mr-5 text-[#78b4ff] underline">商品叠加</a>
        <a href="#period" className="mr-[21px] text-[#78b4ff] underline">周期</a>
        <div className="mr-px flex gap-px">
          {['M13 5.500v3H7v2.500L3 7l4-4v2.500z', 'M3 5.500v3h6v2.500L13 7 9 3v2.500z', 'M9.500 0v14M0 9.500h9M12 3.500h3M12 6.500h3M12 9.500h3'].map((d, i) => (
            <button key={d} aria-label={['后退', '前进', '布局'][i]}>
              <svg width="16" height="14" fill="none" stroke="#78b4ff">
                <rect x=".5" y=".5" width="15" height="13" />
                <path d={d} />
              </svg>
            </button>
          ))}
        </div>
      </div>
      <PricePane />
      <VolumePane />
      <MacdPane />
      <NdbPane />
      <RsiPane />
      <CciPane />
      <DateAxis />
    </main>
  );
}

const SIDE_TABS = ['国内期货', '股指期货', '期权报价', '期权策略', '热点排名', '新闻资讯'];

function SideTab({ label, dark }: { label: string; dark?: boolean }) {
  return (
    <button className="relative flex h-[82px] w-[17px] shrink-0 items-center justify-center pb-1">
      <svg className="absolute inset-0" width="17" height="82">
        <path d="M17 .5H3L.5 3v67L16.500 81.500" fill={dark ? '#787878' : '#f0efe8'} stroke="#666" />
      </svg>
      <span
        className={
          dark
            ? "relative font-['Liberation_Mono',monospace] text-[11px] leading-[13px] whitespace-pre-line text-white"
            : 'relative w-3 text-[12px] leading-3 text-[#444]'
        }
      >
        {label}
      </span>
    </button>
  );
}

function SideBar() {
  return (
    <aside className="flex w-6 shrink-0 bg-[#d4d0c8]">
      <div className="ml-[2px] w-[2px] bg-white" />
      <div className="flex w-[18px] flex-col bg-[#cdcdcd]">
        <div className="relative h-[46px] shrink-0 bg-linear-to-b from-[#e8e8e8] to-[#d8d8d8]">
          <svg className="absolute top-[27px] left-1" width="16" height="16" viewBox="0 0 16 16">
            <path d="M8 1L0 8l8 7v-4h8V5H8z" fill="#f8c830" stroke="#a88020" />
          </svg>
        </div>
        <SideTab label={'j,\ns,\nf\nx\n▸'} dark />
        {SIDE_TABS.map((t) => (
          <SideTab key={t} label={t} />
        ))}
      </div>
      <div className="mt-[46px] ml-auto w-[2px] bg-black" />
    </aside>
  );
}

function StatusBar() {
  return (
    <footer className="flex h-5 shrink-0 items-center gap-3 bg-linear-to-b from-[#c8c8c8] to-[#b8b8b8] pl-1 text-[12px] leading-none text-[#333]">
      <span className="ml-3 text-[#ff2828]">3372.86</span>
      <span className="ml-4 text-[#ff2828]">1.13</span>
      <span>4223.99亿</span>
      <span className="ml-1">深</span>
      <span className="text-[#108010]">12613.58</span>
      <span className="ml-4 text-[#108010]">-25.27</span>
      <span>5783.35亿</span>
      <span className="ml-1">300</span>
      <span className="text-[#108010]">4277.28</span>
      <span className="ml-4 text-[#108010]">-2.47</span>
      <span>2369.44亿</span>
      <span className="mr-1 ml-auto">平 | 15:57</span>
    </footer>
  );
}

export default function App() {
  return (
    <div className="relative flex h-screen overflow-hidden bg-[#d4d0c8] font-['Noto_Sans_CJK_SC',sans-serif]">
      <div className="flex min-w-0 flex-1 flex-col">
        <Header />
        <div className="flex shrink-0 pl-[3px]">
          <ChartPanel />
          <QuotePanel />
        </div>
        <StatusBar />
      </div>
      <SideBar />
      <strong className="absolute top-1 right-px font-['Open_Sans','Noto_Sans_CJK_SC',sans-serif] text-[20px] leading-6 text-[#ff6400] [text-shadow:0_0_2px_white]">
        5E天资5etz.com
      </strong>
    </div>
  );
}
